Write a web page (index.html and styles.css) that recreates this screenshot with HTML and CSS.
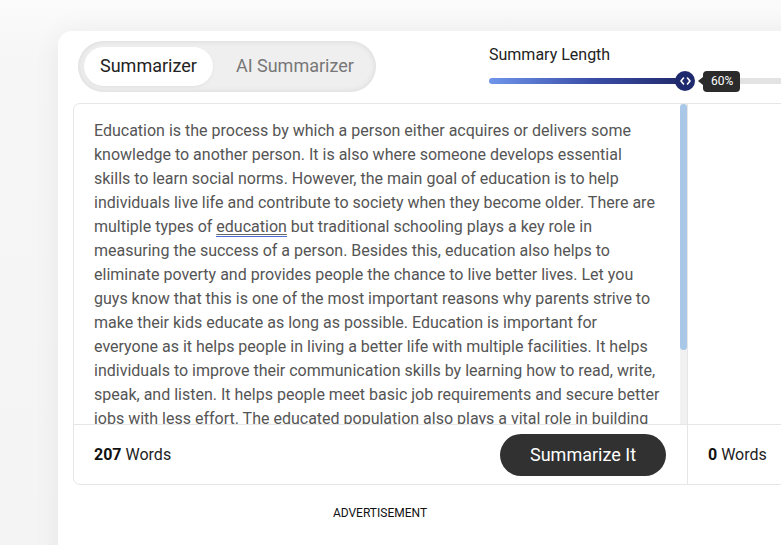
FILE: index.html
```html
<!DOCTYPE html>
<html>
<head>
<meta charset="utf-8">
<link rel="stylesheet" href="styles.css">
</head>
<body>
<div class="card">
  <div class="header">
    <div class="tabs">
      <div class="tab active">Summarizer</div>
      <div class="tab">AI Summarizer</div>
    </div>
    <div class="length">
      <div class="length-label">Summary Length</div>
      <div class="slider">
        <div class="track-fill"></div>
        <div class="thumb">
          <svg width="11" height="8" viewBox="0 0 11 8"><path d="M3.5 1 L1 4 L3.5 7 M7.5 1 L10 4 L7.5 7" fill="none" stroke="#fff" stroke-width="1.6" stroke-linecap="round" stroke-linejoin="round"/></svg>
        </div>
        <div class="tip">60%</div>
        <div class="track-rest"></div>
      </div>
    </div>
  </div>
  <div class="box">
    <div class="pane-left">
      <div class="text-wrap">
        <div class="text">Education is the process by which a person either acquires or delivers some knowledge to another person. It is also where someone develops essential skills to learn social norms. However, the main goal of education is to help individuals live life and contribute to society when they become older. There are multiple types of <span class="spell">education</span> but traditional schooling plays a key role in measuring the success of a person. Besides this, education also helps to eliminate poverty and provides people the chance to live better lives. Let you guys know that this is one of the most important reasons why parents strive to make their kids educate as long as possible. Education is important for everyone as it helps people in living a better life with multiple facilities. It helps individuals to improve their communication skills by learning how to read, write, speak, and listen. It helps people meet basic job requirements and secure better jobs with less effort. The educated population also plays a vital role in building a strong nation and its economy.</div>
        <div class="scrollbar"><div class="scroll-thumb"></div></div>
      </div>
      <div class="footer">
        <div class="count"><b>207</b> Words</div>
        <button class="btn">Summarize It</button>
      </div>
    </div>
    <div class="pane-right">
      <div class="out"></div>
      <div class="footer">
        <div class="count"><b>0</b> Words</div>
      </div>
    </div>
  </div>
  <div class="ad">ADVERTISEMENT</div>
</div>
</body>
</html>
```
FILE: styles.css
```css
html, body {
  margin: 0;
  padding: 0;
}
body {
  width: 781px;
  height: 545px;
  overflow: hidden;
  background: linear-gradient(180deg, #fbfbfb 0px, #f6f6f6 60px, #f4f4f4 100%);
  font-family: Roboto, "Liberation Sans", sans-serif;
  padding-top: 31px;
  padding-left: 58px;
  box-sizing: border-box;
}
.card {
  width: 900px;
  height: 600px;
  background: #fff;
  border-radius: 14px 0 0 0;
  box-shadow: 0 0 28px rgba(0, 0, 0, 0.06);
  padding: 10px 0 0 15px;
  box-sizing: border-box;
}
.header {
  display: flex;
  align-items: flex-start;
  height: 62px;
}
.tabs {
  margin-left: 5px;
  width: 298px;
  height: 51px;
  box-sizing: border-box;
  border-radius: 26px;
  background: #efefef;
  box-shadow: inset 0 0 6px rgba(0, 0, 0, 0.10);
  display: flex;
  align-items: center;
  padding: 0 6px;
  gap: 7px;
}
.tab {
  font-size: 18px;
  color: #777;
  height: 39px;
  line-height: 38px;
  padding: 0 16px;
  border-radius: 20px;
}
.tab.active {
  background: #fff;
  color: #222;
  box-shadow: 0 1px 3px rgba(0, 0, 0, 0.06);
}
.length {
  margin-left: 113px;
  padding-top: 4px;
}
.length-label {
  font-size: 16px;
  color: #222;
  line-height: 20px;
}
.slider {
  display: flex;
  align-items: center;
  margin-top: 5px;
  height: 22px;
}
.track-fill {
  width: 188px;
  height: 6px;
  border-radius: 3px 0 0 3px;
  background: linear-gradient(90deg, #6f95ea, #3a4ea8 55%, #232c6f);
}
.thumb {
  width: 20px;
  height: 20px;
  border-radius: 50%;
  background: #1f2a6e;
  display: flex;
  align-items: center;
  justify-content: center;
  margin-left: -2px;
}
.tip {
  position: relative;
  margin-left: 8px;
  background: #2b2b2b;
  color: #fff;
  font-size: 12px;
  height: 21px;
  line-height: 21px;
  padding: 0 7px 0 8px;
  border-radius: 4px;
  z-index: 1;
}
.tip::before {
  content: "";
  position: absolute;
  left: -5px;
  top: 6px;
  border-style: solid;
  border-width: 4.5px 5px 4.5px 0;
  border-color: transparent #2b2b2b transparent transparent;
}
.track-rest {
  width: 60px;
  height: 6px;
  background: #e3e3e3;
  margin-left: -4px;
}
.box {
  display: flex;
  width: 760px;
  height: 382px;
  border: 1px solid #e6e6e6;
  border-radius: 7px;
  box-sizing: border-box;
}
.pane-left {
  width: 613px;
  border-right: 1px solid #e6e6e6;
  display: flex;
  flex-direction: column;
}
.text-wrap {
  display: flex;
  height: 320px;
  overflow: hidden;
  border-bottom: 1px solid #e6e6e6;
}
.text {
  width: 566px;
  padding: 15px 12px 0 20px;
  font-size: 16px;
  line-height: 24px;
  color: #555;
  flex: none;
}
.spell {
  text-decoration: underline;
  text-decoration-color: #666;
  text-underline-offset: 2px;
  border-bottom: 1.5px solid #4a6cd4;
}
.scrollbar {
  width: 7px;
  background: #f1f1f1;
  flex: none;
  margin-left: auto;
}
.scroll-thumb {
  height: 246px;
  background: #a9c8e8;
  border-radius: 4px;
}
.footer {
  height: 59px;
  display: flex;
  align-items: center;
  justify-content: space-between;
  padding: 0 20px;
}
.count {
  font-size: 16px;
  color: #222;
  margin-top: -1px;
}
.count b {
  color: #111;
  font-weight: 700;
}
.btn {
  font-family: Roboto, "Liberation Sans", sans-serif;
  font-size: 18px;
  color: #fff;
  background: #313131;
  border: none;
  width: 166px;
  height: 42px;
  border-radius: 21px;
  margin-right: 1px;
}
.pane-right {
  flex: 1;
  display: flex;
  flex-direction: column;
}
.out {
  height: 320px;
  border-bottom: 1px solid #e6e6e6;
}
.pane-right .footer {
  justify-content: flex-start;
}
.ad {
  width: 614px;
  text-align: center;
  font-size: 12px;
  color: #111;
  margin-top: 21px;
}
```
